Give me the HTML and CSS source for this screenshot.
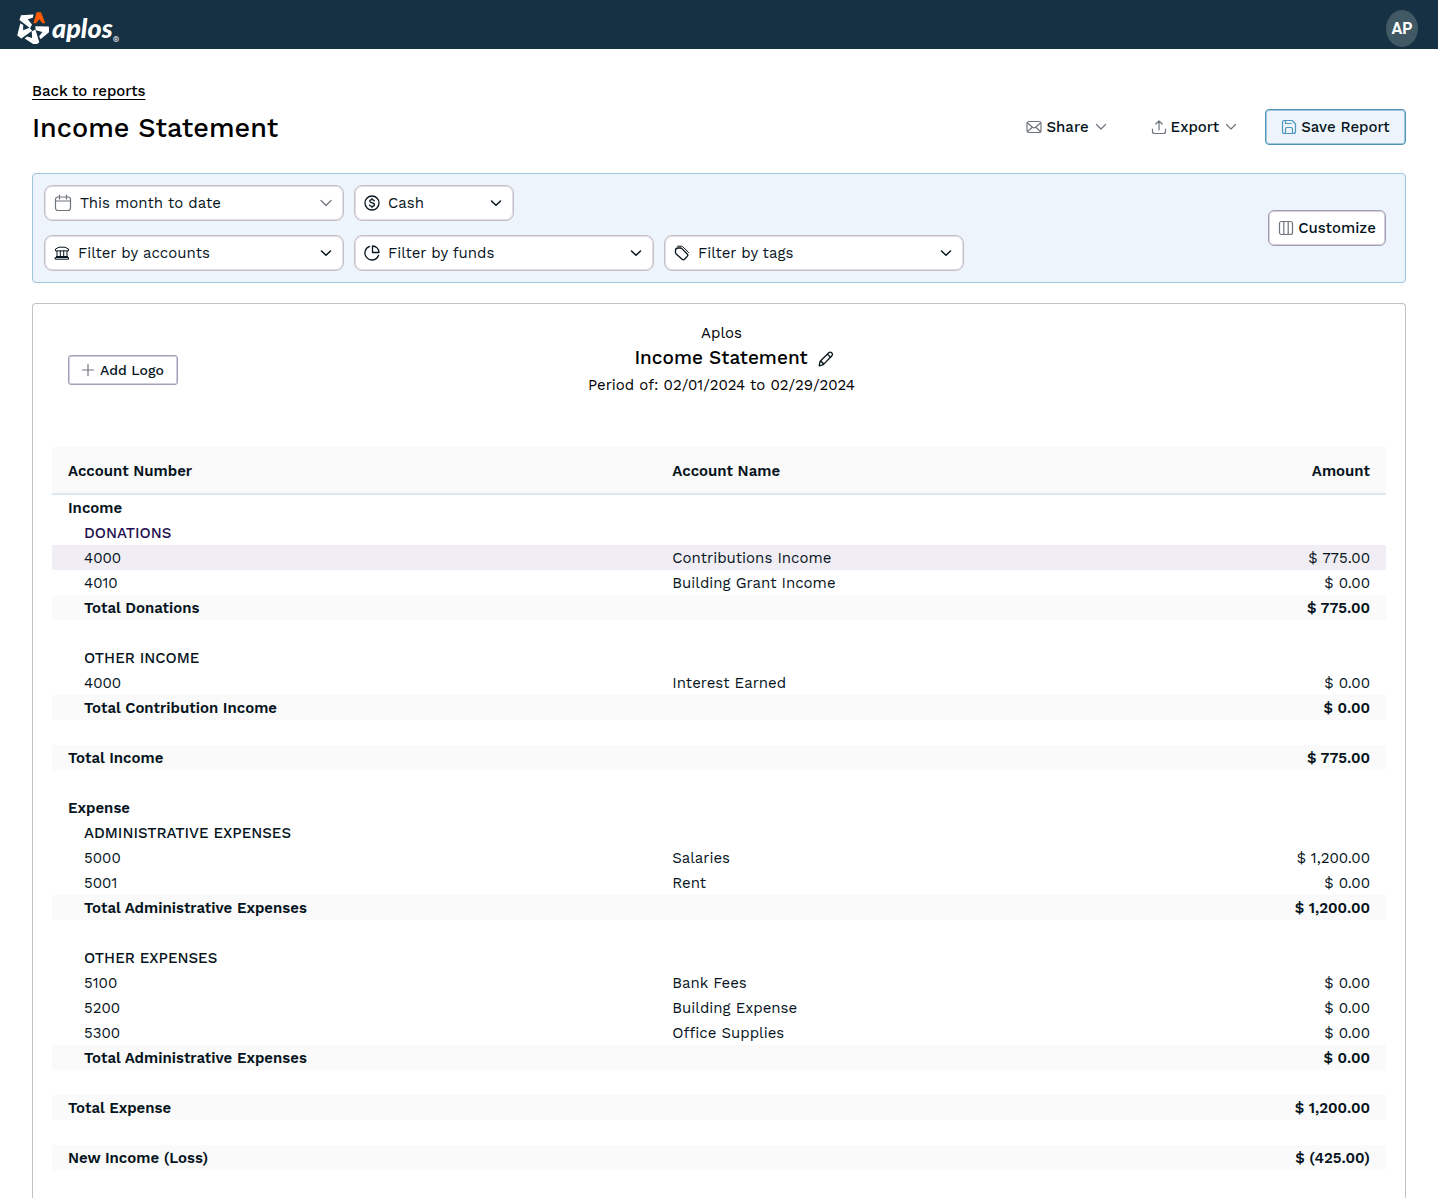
FILE: index.html
```
<!DOCTYPE html>
<html lang="en">
<head>
    <meta charset="UTF-8">
    <meta name="viewport" content="width=device-width, initial-scale=1.0">
    <title>Income Statement</title>
    <link rel="stylesheet" href="styles.css">
</head>
<body>
    <header class="topbar">
        <a href="#" class="logo">
            <svg width="32" height="32" viewBox="0 0 96 96" fill="#fff">
                <path d="M59 1h13l13 33h-9L67 22 57 34h-8z" fill="#ff5a00"/>
                <path d="M58 2h15l14 35-10 1-9-13-11 17-12-2z" transform="rotate(72 48 48)"/>
                <path d="M58 2h15l14 35-10 1-9-13-11 17-12-2z" transform="rotate(144 48 48)"/>
                <path d="M58 2h15l14 35-10 1-9-13-11 17-12-2z" transform="rotate(216 48 48)"/>
                <path d="M58 2h15l14 35-10 1-9-13-11 17-12-2z" transform="rotate(288 48 48)"/>
            </svg>
            <span class="logo-text">aplos</span><span class="logo-mark">®</span>
        </a>
        <button class="avatar">AP</button>
    </header>

    <main class="page">
        <a href="#" class="back">Back to reports</a>
        <div class="title-row">
            <h1>Income Statement</h1>
            <div class="actions">
                <button class="btn-text">
                    <svg width="16" height="16" viewBox="0 0 16 16" class="icon gray"><rect x="1" y="2.500" width="14" height="11" rx="2"/><path d="M1.500 4l5 4.300q1.500 1.200 3 0l5-4.300M1.500 12.500l4.500-4M14.500 12.500l-4.500-4"/></svg>
                    Share
                    <svg width="12" height="12" viewBox="0 0 12 12" class="icon gray"><path d="M1.500 3.500L6 8l4.500-4.500"/></svg>
                </button>
                <button class="btn-text">
                    <svg width="16" height="16" viewBox="0 0 16 16" class="icon gray"><path d="M8 11V2M4.800 5L8 1.800 11.200 5M1.500 10v2.500q0 2 2 2h9q2 0 2-2V10"/></svg>
                    Export
                    <svg width="12" height="12" viewBox="0 0 12 12" class="icon gray"><path d="M1.500 3.500L6 8l4.500-4.500"/></svg>
                </button>
                <button class="btn-save">
                    <svg width="16" height="16" viewBox="0 0 16 16" class="icon blue"><path d="M3.500 1.500h7.500l3.500 3.500v7.500q0 2-2 2h-9q-2 0-2-2v-9q0-2 2-2zM4.500 1.500v3h5.500M4.500 14.500v-4.500q0-1.500 1.500-1.500h4q1.500 0 1.500 1.500v4.500"/></svg>
                    Save Report
                </button>
            </div>
        </div>

        <section class="filters">
            <div class="filter-rows">
                <div class="filter-row">
                    <div class="select-box date">
                        <svg width="18" height="18" viewBox="0 0 18 18" class="icon gray"><rect x="1.500" y="3" width="15" height="13.500" rx="2.500"/><path d="M1.500 7h15M5.500 1v4M12.500 1v4"/></svg>
                        <select aria-label="Period"><option>This month to date</option></select>
                        <svg width="14" height="14" viewBox="0 0 14 14" class="icon gray chevron"><path d="M2 4.500l5 5 5-5"/></svg>
                    </div>
                    <div class="select-box small">
                        <svg width="16" height="16" viewBox="0 0 16 16" class="icon dark"><circle cx="8" cy="8" r="7"/><path d="M10.300 5.800q-.5-1.200-2.300-1.200-2.200 0-2.200 1.600 0 1.400 2.200 1.700 2.400.3 2.400 1.900 0 1.600-2.400 1.600-2 0-2.500-1.300M8 3.500v1M8 11.500v1"/></svg>
                        <select aria-label="Basis"><option>Cash</option></select>
                        <svg width="14" height="14" viewBox="0 0 14 14" class="icon dark chevron"><path d="M2.500 5L7 9.200 11.500 5"/></svg>
                    </div>
                </div>
                <div class="filter-row">
                    <div class="select-box">
                        <svg width="16" height="16" viewBox="0 0 16 16" class="icon dark bank"><path d="M1.500 5.500v-1.500L5 2.200h6L14.500 4v1.500zM3 6v5.500M6.300 6v5.500M9.700 6v5.500M13 6v5.500M2.500 11.500h11M1.500 14.200h13v-1.700h-13z"/></svg>
                        <select aria-label="Accounts"><option>Filter by accounts</option></select>
                        <svg width="14" height="14" viewBox="0 0 14 14" class="icon dark chevron"><path d="M2.500 5L7 9.200 11.500 5"/></svg>
                    </div>
                    <div class="select-box">
                        <svg width="16" height="16" viewBox="0 0 16 16" class="icon dark"><path d="M5.500 1.400a7 7 0 1 0 9 9M8.500 1v6.500H15A6.500 6.500 0 0 0 8.500 1z"/></svg>
                        <select aria-label="Funds"><option>Filter by funds</option></select>
                        <svg width="14" height="14" viewBox="0 0 14 14" class="icon dark chevron"><path d="M2.500 5L7 9.200 11.500 5"/></svg>
                    </div>
                    <div class="select-box">
                        <svg width="16" height="16" viewBox="0 0 16 16" class="icon dark"><path d="M1.500 5.500q0-2.500 2.500-2.500h2.500q.8 0 1.400.6l5.300 5.400q1.200 1.200 0 2.400l-2.700 2.900q-1.200 1.200-2.400 0L2.200 9q-.7-.7-.7-1.600z"/><path d="M3.500 1.200h4q.8 0 1.400.6L14.500 7.500" stroke-width="1"/></svg>
                        <select aria-label="Tags"><option>Filter by tags</option></select>
                        <svg width="14" height="14" viewBox="0 0 14 14" class="icon dark chevron"><path d="M2.500 5L7 9.200 11.500 5"/></svg>
                    </div>
                </div>
            </div>
            <button class="btn-customize">
                <svg width="16" height="16" viewBox="0 0 16 16" class="icon gray"><rect x="1.500" y="1.500" width="13" height="13" rx="2"/><path d="M5.800 1.500v13M10.200 1.500v13"/></svg>
                Customize
            </button>
        </section>

        <section class="report">
            <div class="report-head">
                <button class="btn-logo">
                    <svg width="12" height="12" viewBox="0 0 12 12" class="icon gray"><path d="M6 .5v11M.5 6h11"/></svg>
                    Add Logo
                </button>
                <div class="report-title">
                    <p>Aplos</p>
                    <h2>
                        Income Statement
                        <button class="btn-edit" aria-label="Edit title">
                            <svg width="16" height="16" viewBox="0 0 16 16" class="icon dark"><path d="M1.200 14.800l.8-4.300 8.800-8.700q1.500-1.200 2.800 0 1.500 1.500.3 3L5.300 13.600zM9.500 3.200l3.200 3.200M2 10.500q2.800 0 3.300 3"/></svg>
                        </button>
                    </h2>
                    <p>Period of: 02/01/2024 to 02/29/2024</p>
                </div>
            </div>

            <table>
                <thead>
                    <tr><th>Account Number</th><th>Account Name</th><th>Amount</th></tr>
                </thead>
                <tbody>
                    <tr class="section"><td>Income</td><td></td><td></td></tr>
                    <tr class="group active"><td>DONATIONS</td><td></td><td></td></tr>
                    <tr class="account selected"><td>4000</td><td>Contributions Income</td><td>$ 775.00</td></tr>
                    <tr class="account"><td>4010</td><td>Building Grant Income</td><td>$ 0.00</td></tr>
                    <tr class="subtotal"><td>Total Donations</td><td></td><td>$ 775.00</td></tr>
                    <tr class="spacer"><td colspan="3"></td></tr>
                    <tr class="group"><td>OTHER INCOME</td><td></td><td></td></tr>
                    <tr class="account"><td>4000</td><td>Interest Earned</td><td>$ 0.00</td></tr>
                    <tr class="subtotal"><td>Total Contribution Income</td><td></td><td>$ 0.00</td></tr>
                    <tr class="spacer"><td colspan="3"></td></tr>
                    <tr class="total"><td>Total Income</td><td></td><td>$ 775.00</td></tr>
                    <tr class="spacer"><td colspan="3"></td></tr>
                </tbody>
                <tbody>
                    <tr class="section"><td>Expense</td><td></td><td></td></tr>
                    <tr class="group"><td>ADMINISTRATIVE EXPENSES</td><td></td><td></td></tr>
                    <tr class="account"><td>5000</td><td>Salaries</td><td>$ 1,200.00</td></tr>
                    <tr class="account"><td>5001</td><td>Rent</td><td>$ 0.00</td></tr>
                    <tr class="subtotal"><td>Total Administrative Expenses</td><td></td><td>$ 1,200.00</td></tr>
                    <tr class="spacer"><td colspan="3"></td></tr>
                    <tr class="group"><td>OTHER EXPENSES</td><td></td><td></td></tr>
                    <tr class="account"><td>5100</td><td>Bank Fees</td><td>$ 0.00</td></tr>
                    <tr class="account"><td>5200</td><td>Building Expense</td><td>$ 0.00</td></tr>
                    <tr class="account"><td>5300</td><td>Office Supplies</td><td>$ 0.00</td></tr>
                    <tr class="subtotal"><td>Total Administrative Expenses</td><td></td><td>$ 0.00</td></tr>
                    <tr class="spacer"><td colspan="3"></td></tr>
                    <tr class="total"><td>Total Expense</td><td></td><td>$ 1,200.00</td></tr>
                    <tr class="spacer"><td colspan="3"></td></tr>
                    <tr class="total"><td>New Income (Loss)</td><td></td><td>$ (425.00)</td></tr>
                </tbody>
            </table>
        </section>
    </main>
</body>
</html>
```
FILE: styles.css
```
* {
    box-sizing: border-box;
    margin: 0;
    padding: 0;
}

body {
    font-family: "Work Sans", Inter, "Liberation Sans", sans-serif;
    font-size: 15px;
    line-height: 20px;
    color: #06141d;
    background: #fff;
    padding-right: 2px;
}

button,
select {
    font: inherit;
    color: inherit;
    background: none;
    border: none;
    cursor: pointer;
}

button {
    display: flex;
    align-items: center;
    justify-content: center;
    font-weight: 500;
    white-space: nowrap;
}

/* icons */
.icon {
    fill: none;
    stroke-width: 1.2;
    stroke-linecap: round;
    stroke-linejoin: round;
    flex: none;
}

.gray {
    stroke: #6f757c;
}

.blue {
    stroke: #5096be;
}

.dark {
    stroke: #06141d;
    stroke-width: 1.3;
}

.chevron.dark {
    stroke-width: 1.5;
}

.bank {
    stroke-width: 1;
}

/* top bar */
.topbar {
    display: flex;
    justify-content: space-between;
    height: 49px;
    padding: 10px 20px 0 17px;
    background: #153143;
}

.logo {
    display: flex;
    align-items: center;
    height: 36px;
    color: #fff;
    text-decoration: none;
}

.logo-text {
    margin-left: 3px;
    font: italic 900 27px/34px Lato, sans-serif;
}

.logo-mark {
    align-self: flex-end;
    font-size: 8px;
    line-height: 12px;
}

.avatar {
    width: 32px;
    height: 37px;
    border-radius: 50%;
    background: #405965;
    color: #fff;
    font: bold 16px/20px Roboto, sans-serif;
}

/* page heading */
.page {
    padding: 32px 32px 0;
}

.back {
    display: inline-block;
    color: #000;
    font-weight: 500;
    text-decoration-thickness: 1px;
    text-underline-offset: 3px;
}

.title-row {
    display: flex;
    align-items: center;
    justify-content: space-between;
    margin: 8px 0 28px;
}

h1 {
    padding-top: 2px;
    color: #000;
    font-size: 27px;
    line-height: 34px;
    font-weight: 500;
}

.actions {
    display: flex;
    gap: 28px;
}

.btn-text {
    gap: 4px;
    height: 36px;
}

.btn-text + .btn-text {
    margin-left: 16px;
}

.btn-text .icon:last-child {
    margin-left: 2px;
}

.btn-save {
    gap: 4px;
    width: 141px;
    height: 36px;
    border: 1px solid #5093b9;
    border-radius: 4px;
    background: #edf4fb;
    box-shadow: inset 0 0 0 1px #a3c8de;
}

/* filters */
.filters {
    display: flex;
    align-items: center;
    justify-content: space-between;
    padding: 11px 19px 11px 11px;
    border: 1px solid #9cc5dd;
    border-radius: 4px;
    background: #edf4fb;
}

.filter-rows {
    display: grid;
    gap: 14px;
}

.filter-row {
    display: flex;
    gap: 10px;
}

.select-box {
    position: relative;
    width: 300px;
}

.select-box.small {
    width: 160px;
}

.select-box select {
    display: block;
    width: 100%;
    height: 36px;
    padding: 0 33px;
    border: 1px solid #c4bfc9;
    border-radius: 8px;
    background: #fff;
    box-shadow: inset 0 0 0 1px #e0dde3;
    appearance: none;
}

.select-box.date select {
    padding-left: 35px;
}

.select-box .icon {
    position: absolute;
    top: 10px;
    left: 10px;
    pointer-events: none;
}

.select-box.date .icon {
    top: 9px;
}

.select-box .icon.chevron {
    top: 11px;
    left: auto;
    right: 11px;
}

.btn-customize {
    gap: 4px;
    width: 118px;
    height: 36px;
    border: 1px solid #a59db8;
    border-radius: 6px;
    background: #fff;
    box-shadow: inset 0 0 0 1px #d2cedb;
}

/* report */
.report {
    margin-top: 20px;
    padding: 19px 19px 28px;
    border: 1px solid #c2c2c6;
    border-bottom: none;
    border-radius: 4px 4px 0 0;
}

.report-head {
    display: grid;
    grid-template-columns: 1fr auto 1fr;
    align-items: end;
    padding: 0 11px 0 16px;
    margin-bottom: 52px;
}

.btn-logo {
    gap: 6px;
    width: 110px;
    height: 30px;
    margin-bottom: 10px;
    border: 1px solid #a59db8;
    border-radius: 3px;
    box-shadow: inset 0 0 0 1px #d2cedb;
    font-size: 14px;
}

.report-title {
    color: #000;
    text-align: center;
}

h2 {
    display: flex;
    align-items: center;
    justify-content: center;
    gap: 10px;
    padding-left: 25px;
    font-size: 19px;
    line-height: 30px;
    font-weight: 500;
}

.btn-edit {
    padding-top: 2px;
}

h2 + p {
    margin-top: 2px;
}

table {
    width: 100%;
    table-layout: fixed;
    border-collapse: separate;
    border-spacing: 0;
}

th,
td {
    padding: 0 16px;
    text-align: left;
}

th {
    height: 48px;
    padding-top: 2px;
    background: #fafafa;
    border-bottom: 2px solid #dce9f3;
    font-weight: 600;
}

td {
    height: 25px;
}

th:first-child {
    width: 45%;
}

th:nth-child(2),
td:nth-child(2) {
    padding-left: 20px;
}

th:last-child,
td:last-child {
    text-align: right;
}

.group td:first-child,
.account td:first-child,
.subtotal td:first-child {
    padding-left: 32px;
}

.group {
    font-weight: 500;
}

.group.active {
    color: #23104f;
}

.selected {
    background: #f0eef4;
}

.section,
.subtotal,
.total {
    font-weight: 600;
}

.subtotal,
.total {
    background: #fafafa;
}
```
